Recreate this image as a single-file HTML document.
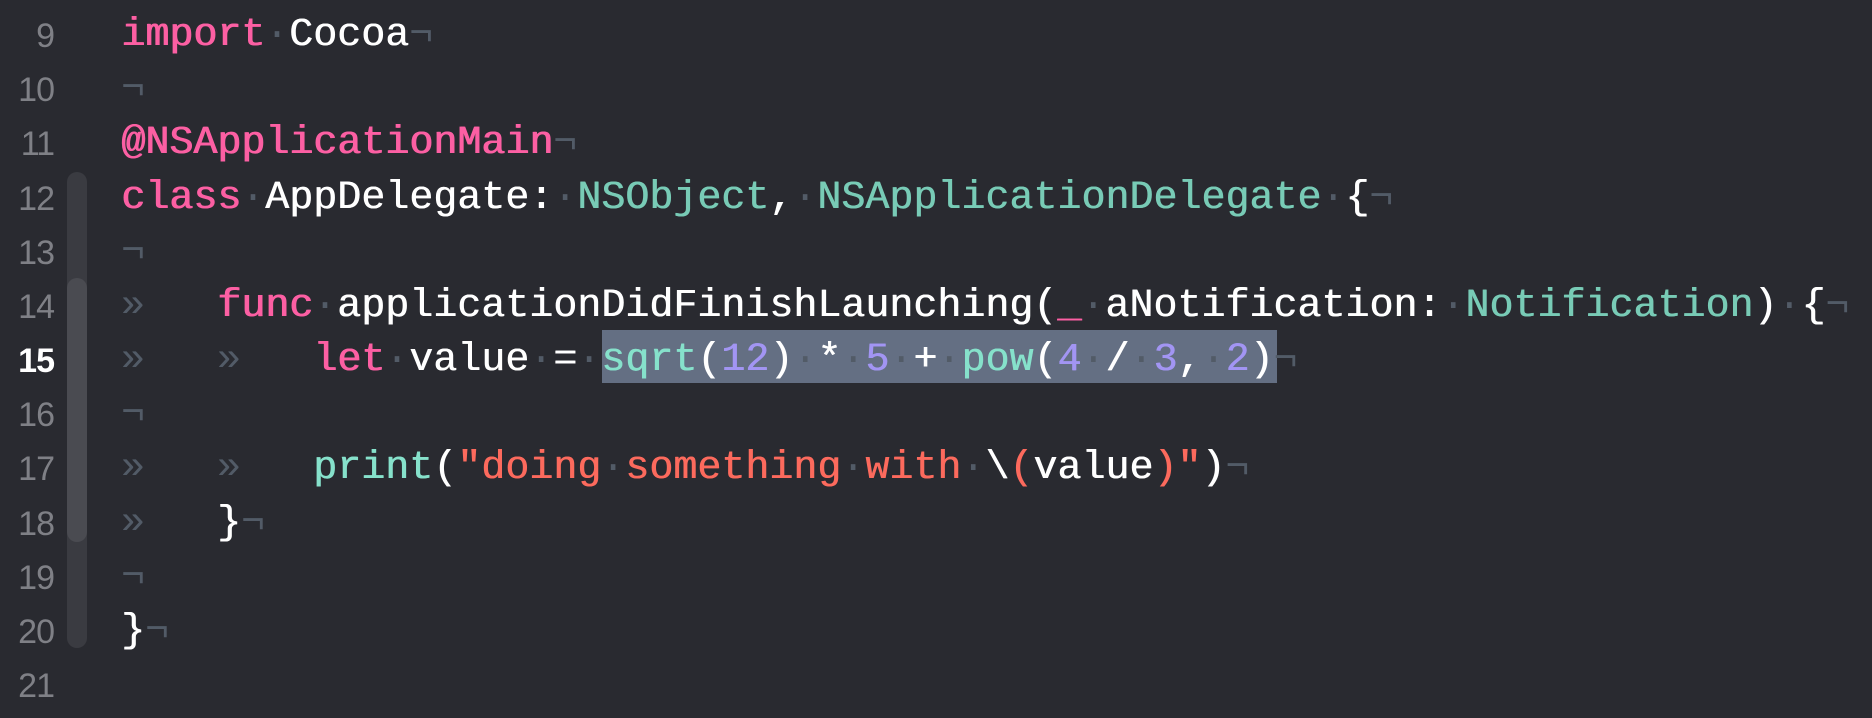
<!DOCTYPE html>
<html><head><meta charset="utf-8"><style>
html,body{margin:0;padding:0;}
body{width:1872px;height:714px;background:#292a30;position:relative;overflow:hidden;}
.ln{position:absolute;left:0;width:54px;text-align:right;font-family:"Liberation Sans",sans-serif;font-size:34px;color:#7f8086;line-height:54.17px;letter-spacing:-1px;}
.ln.cur{color:#ffffff;font-weight:bold;}
.code{position:absolute;left:121px;font-family:"Liberation Mono",monospace;font-size:40px;color:#ffffff;line-height:54.17px;white-space:pre;text-shadow:0.6px 0 0 currentColor;}
.k{color:#fc5fa3;text-shadow:1px 0 0 currentColor;}
.t{color:#78cbb6;}
.f{color:#86e1cb;}
.n{color:#a295f3;}
.s{color:#fc6a5d;}
.i{color:#525b67;text-shadow:none;}
.hl{position:absolute;left:602px;top:330px;width:675px;height:53px;background:#646f83;}
.bar{position:absolute;left:67px;width:20px;border-radius:10px;}
.wrap{position:absolute;left:0;top:4px;width:1872px;height:714px;}
</style></head><body>
<div class="bar" style="top:172px;height:476px;background:#3a3b41;"></div>
<div class="bar" style="top:278px;height:264px;background:#4a4b51;"></div>
<div class="hl"></div>
<div class="wrap">
<div class="ln" style="top:5px">9</div>
<div class="ln" style="top:59.17px">10</div>
<div class="ln" style="top:113.34px">11</div>
<div class="ln" style="top:167.51px">12</div>
<div class="ln" style="top:221.68px">13</div>
<div class="ln" style="top:275.85px">14</div>
<div class="ln cur" style="top:330.02px">15</div>
<div class="ln" style="top:384.19px">16</div>
<div class="ln" style="top:438.36px">17</div>
<div class="ln" style="top:492.53px">18</div>
<div class="ln" style="top:546.7px">19</div>
<div class="ln" style="top:600.87px">20</div>
<div class="ln" style="top:655.04px">21</div>

<div class="code" style="top:5px"><span class="k">import</span><span class="i">·</span>Cocoa<span class="i">¬</span></div>
<div class="code" style="top:59.17px"><span class="i">¬</span></div>
<div class="code" style="top:113.34px"><span class="k">@NSApplicationMain</span><span class="i">¬</span></div>
<div class="code" style="top:167.51px"><span class="k">class</span><span class="i">·</span>AppDelegate:<span class="i">·</span><span class="t">NSObject</span>,<span class="i">·</span><span class="t">NSApplicationDelegate</span><span class="i">·</span>{<span class="i">¬</span></div>
<div class="code" style="top:221.68px"><span class="i">¬</span></div>
<div class="code" style="top:275.85px"><span class="i">»   </span><span class="k">func</span><span class="i">·</span>applicationDidFinishLaunching(<span class="k">_</span><span class="i">·</span>aNotification:<span class="i">·</span><span class="t">Notification</span>)<span class="i">·</span>{<span class="i">¬</span></div>
<div class="code" style="top:330.02px"><span class="i">»   »   </span><span class="k">let</span><span class="i">·</span>value<span class="i">·</span>=<span class="i">·</span><span class="f">sqrt</span>(<span class="n">12</span>)<span class="i">·</span>*<span class="i">·</span><span class="n">5</span><span class="i">·</span>+<span class="i">·</span><span class="f">pow</span>(<span class="n">4</span><span class="i">·</span>/<span class="i">·</span><span class="n">3</span>,<span class="i">·</span><span class="n">2</span>)<span class="i">¬</span></div>
<div class="code" style="top:384.19px"><span class="i">¬</span></div>
<div class="code" style="top:438.36px"><span class="i">»   »   </span><span class="f">print</span>(<span class="s">"doing</span><span class="i">·</span><span class="s">something</span><span class="i">·</span><span class="s">with</span><span class="i">·</span>\<span class="s">(</span>value<span class="s">)"</span>)<span class="i">¬</span></div>
<div class="code" style="top:492.53px"><span class="i">»   </span>}<span class="i">¬</span></div>
<div class="code" style="top:546.7px"><span class="i">¬</span></div>
<div class="code" style="top:600.87px">}<span class="i">¬</span></div>
</div>
</body></html>
